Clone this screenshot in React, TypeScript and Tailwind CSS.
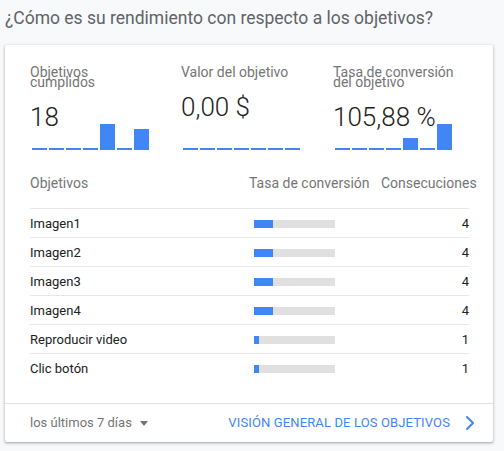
import { ChevronRight } from 'lucide-react'

interface Metric {
  label: string
  value: string
  bars: number[]
  width: string
}

const METRICS: Metric[] = [
  { label: 'Objetivos cumplidos', value: '18', bars: [2, 2, 2, 2, 26, 2, 21], width: 'w-[151px]' },
  { label: 'Valor del objetivo', value: '0,00 $', bars: [2, 2, 2, 2, 2, 2, 2], width: 'w-[152px]' },
  { label: 'Tasa de conversión del objetivo', value: '105,88 %', bars: [2, 2, 2, 2, 12, 2, 26], width: 'flex-1' },
]

const GOALS = [
  { name: 'Imagen1', pct: 19, count: 4 },
  { name: 'Imagen2', pct: 19, count: 4 },
  { name: 'Imagen3', pct: 19, count: 4 },
  { name: 'Imagen4', pct: 19, count: 4 },
  { name: 'Reproducir video', pct: 5, count: 1 },
  { name: 'Clic botón', pct: 5, count: 1 },
]

function Sparkbars({ bars }: { bars: number[] }) {
  return (
    <div className="absolute left-[2px] bottom-0 flex items-end gap-[2px]">
      {bars.map((h, i) => (
        <div key={i} className="w-[15px] bg-[#4285f4]" style={{ height: h }} />
      ))}
    </div>
  )
}

export default function App() {
  return (
    <div className="h-[451px] bg-[#f8f9fa] px-[5px] pt-[6px] font-['Roboto',sans-serif] overflow-hidden">
      <h2 className="text-[17.5px] leading-[24px] text-[#5f6368] font-normal">
        ¿Cómo es su rendimiento con respecto a los objetivos?
      </h2>

      <div className="mt-[15px] w-[488px] bg-white rounded-[2px] shadow-[0_1px_2px_rgba(60,64,67,0.3),0_1px_3px_1px_rgba(60,64,67,0.15)]">
        {/* Metrics */}
        <div className="flex pl-[25px] pr-[24px] pt-[22px]">
          {METRICS.map((m) => (
            <div key={m.label} className={`relative h-[83px] ${m.width}`}>
              <p className="text-[14px] leading-[10px] text-[#757575] w-[124px]">{m.label}</p>
              <p className="mt-[15px] text-[26px] leading-[30px] font-light text-[#212121]">{m.value}</p>
              <Sparkbars bars={m.bars} />
            </div>
          ))}
        </div>

        {/* Table */}
        <div className="ml-[25px] mr-[24px] mt-[23px]">
          <div className="grid grid-cols-[219px_132px_1fr] pb-[15px] border-b border-[#e8e8e8] text-[14px] leading-[20px] text-[#757575]">
            <span>Objetivos</span>
            <span className="whitespace-nowrap">Tasa de conversión</span>
            <span className="whitespace-nowrap">Consecuciones</span>
          </div>
          {GOALS.map((g, i) => (
            <div
              key={g.name}
              className={`grid grid-cols-[219px_132px_1fr] items-center h-[29px] pt-[1px] text-[13px] text-[#212121] ${
                i < GOALS.length - 1 ? 'border-b border-[#e8e8e8]' : ''
              }`}
            >
              <span>{g.name}</span>
              <div className="ml-[5px] w-[81px] h-[8px] bg-[#e0e0e0]">
                <div className="h-full bg-[#4285f4]" style={{ width: `${g.pct}px` }} />
              </div>
              <span className="text-right">{g.count}</span>
            </div>
          ))}
        </div>

        {/* Footer */}
        <div className="mt-[20px] border-t border-[#e0e0e0] h-[39px] flex items-center justify-between pl-[25px] pr-[11px]">
          <button className="flex items-center gap-[8px] text-[13px] text-[#757575]">
            los últimos 7 días
            <span className="w-0 h-0 border-l-[4px] border-r-[4px] border-t-[5px] border-l-transparent border-r-transparent border-t-[#757575]" />
          </button>
          <a className="flex items-center gap-[8px] text-[13px] tracking-[0.13px] text-[#4285f4] uppercase">
            Visión general de los objetivos
            <ChevronRight size={24} strokeWidth={2} />
          </a>
        </div>
      </div>
    </div>
  )
}
